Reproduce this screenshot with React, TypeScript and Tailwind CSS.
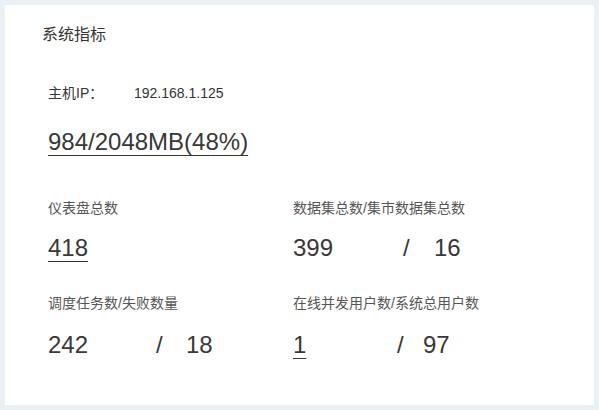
const font = '[font-family:"Liberation_Sans","Noto_Sans_CJK_SC",sans-serif]';

type Stat = {
  label: string;
  first: string;
  second?: string;
  firstW?: number;
  gap?: number;
  underline?: boolean;
};

function Value({ text, underline }: { text: string; underline?: boolean }) {
  return (
    <span
      className={
        underline ? 'underline decoration-1 underline-offset-[5px] [text-decoration-skip-ink:none]' : ''
      }
    >
      {text}
    </span>
  );
}

function StatCell({ s, gap }: { s: Stat; gap: string }) {
  return (
    <div>
      <div className="text-[14px] leading-[20px] text-[#555]">{s.label}</div>
      <div className={`${gap} text-[24px] leading-[32px] text-[#383838] flex`}>
        {s.second ? (
          <>
            <span className="inline-block" style={{ width: s.firstW }}>
              <Value text={s.first} underline={s.underline} />
            </span>
            <span className="inline-block" style={{ width: s.gap }}>/</span>
            <span>{s.second}</span>
          </>
        ) : (
          <Value text={s.first} underline={s.underline} />
        )}
      </div>
    </div>
  );
}

export default function App() {
  const row1: Stat[] = [
    { label: '仪表盘总数', first: '418', underline: true },
    { label: '数据集总数/集市数据集总数', first: '399', second: '16', firstW: 110, gap: 31 },
  ];
  const row2: Stat[] = [
    { label: '调度任务数/失败数量', first: '242', second: '18', firstW: 108, gap: 30 },
    { label: '在线并发用户数/系统总用户数', first: '1', second: '97', firstW: 104, gap: 26, underline: true },
  ];

  return (
    <div className={`h-[410px] bg-[#eaf1f5] p-[5px] ${font}`}>
      <div className="bg-white h-[400px] pl-[37px] pt-[18px]">
        <div className="text-[16px] leading-[24px] text-[#333]">系统指标</div>

        <div className="ml-[6px]">
          <div className="mt-[36px] flex text-[14px] leading-[20px] text-[#333]">
            <span className="w-[86px]">主机IP：</span>
            <span>192.168.1.125</span>
          </div>

          <div className="mt-[23px] text-[24px] leading-[32px] text-[#383838]">
            <Value text="984/2048MB(48%)" underline />
          </div>

          <div className="mt-[40px] grid grid-cols-[245px_1fr] gap-y-[29px]">
            {row1.map((s) => (
              <StatCell key={s.label} s={s} gap="mt-[14px]" />
            ))}
            {row2.map((s) => (
              <StatCell key={s.label} s={s} gap="mt-[16px]" />
            ))}
          </div>
        </div>
      </div>
    </div>
  );
}
